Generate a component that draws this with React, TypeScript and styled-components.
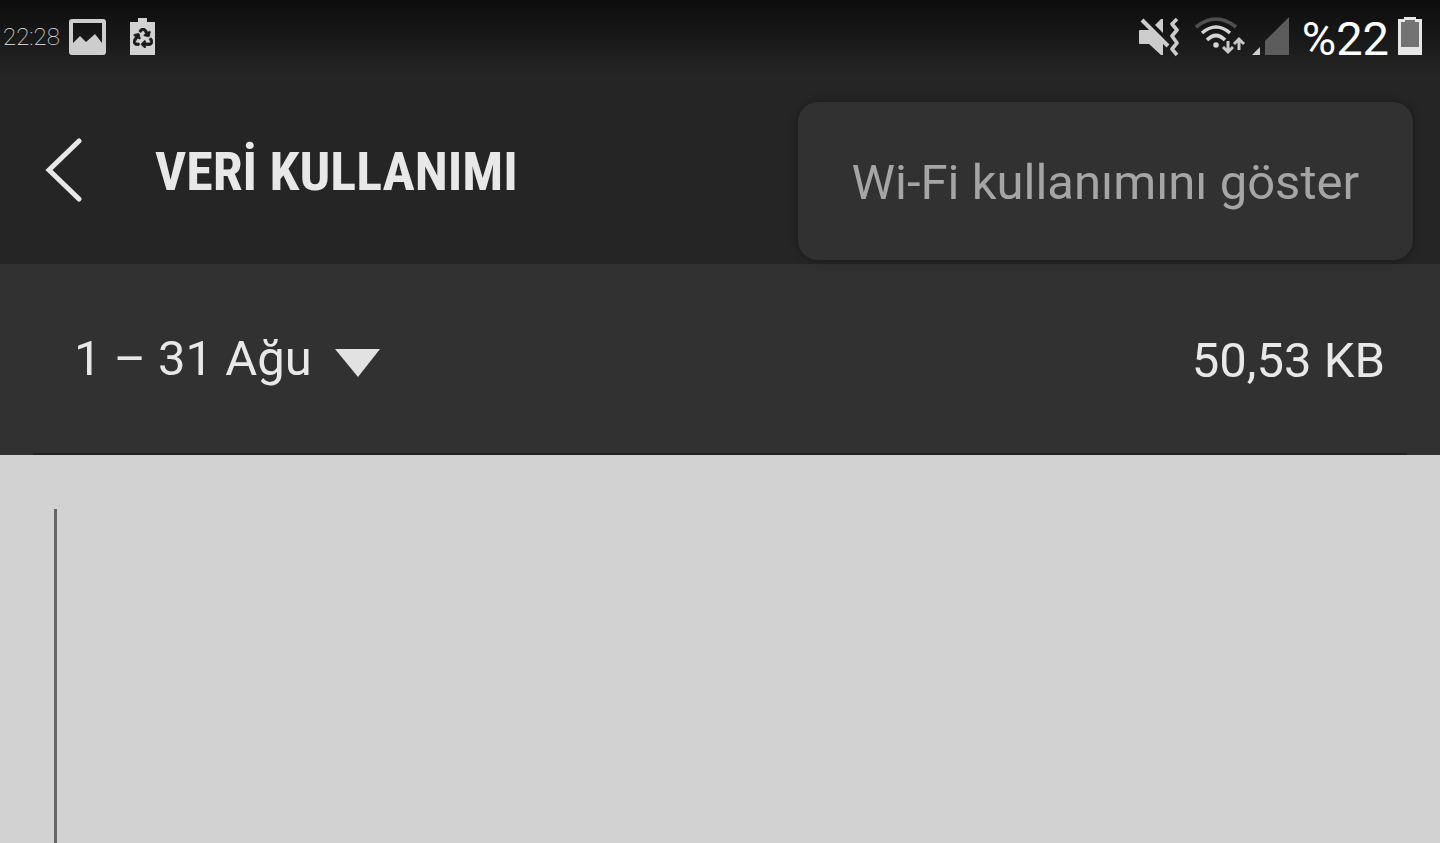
import React from "react";
import styled, { createGlobalStyle } from "styled-components";
import { FaRecycle } from "react-icons/fa";

const GlobalStyle = createGlobalStyle`
  *, *::before, *::after { box-sizing: border-box; }
  body {
    margin: 0;
    background: #d2d2d2;
    color: #e8e8e8;
    font-family: Roboto, "Noto Sans", sans-serif;
  }
`;

const Screen = styled.div`
  display: flex;
  flex-direction: column;
  min-height: 100vh;
`;

const Top = styled.div`
  display: flex;
  flex-direction: column;
  background: linear-gradient(#0c0c0c 0, #252525 76px);
`;

const StatusBar = styled.div`
  display: flex;
  align-items: center;
  justify-content: space-between;
  height: 74px;
  padding: 0 18px 0 3px;
`;

const StatusGroup = styled.div<{ $gap: number }>`
  display: flex;
  align-items: center;
  gap: ${(p) => p.$gap}px;

  svg {
    display: block;
    flex: none;
  }
`;

const Clock = styled.time`
  width: 56px;
  font-size: 24px;
  font-weight: 100;
  line-height: 32px;
`;

const NoticeIcons = styled.div`
  display: flex;
  align-items: center;
  gap: 24px;
  padding-left: 10px;
`;

const BatteryLevel = styled.span`
  font-size: 47px;
  line-height: 56px;
  color: #ffffff;
  padding-top: 4px;
`;

const Header = styled.header`
  position: relative;
  display: flex;
  align-items: center;
  gap: 71px;
  height: 190px;
  padding: 0 44px;
`;

const BackButton = styled.button`
  display: flex;
  padding: 0;
  border: 0;
  background: none;
  color: inherit;
`;

const Title = styled.h1`
  margin: 0;
  padding-top: 6px;
  font-family: "Roboto Condensed", "Liberation Sans Narrow", Roboto, sans-serif;
  font-size: 54px;
  font-weight: 700;
  line-height: 64px;
`;

const Menu = styled.div`
  position: absolute;
  top: 28px;
  right: 27px;
  border-radius: 20px;
  background: #313131;
  box-shadow: 0 0 8px rgba(0, 0, 0, 0.35);
`;

const MenuItem = styled.button`
  padding: 50px 54px 46px;
  border: 0;
  background: none;
  color: #a5a5a5;
  font: inherit;
  font-size: 49px;
  line-height: 62px;
`;

const Cycle = styled.section`
  display: flex;
  flex-direction: column;
  background: #313131;
`;

const CycleRow = styled.div`
  display: flex;
  align-items: center;
  justify-content: space-between;
  height: 189px;
  padding: 0 55px 0 74px;
`;

const Picker = styled.label`
  display: flex;
  align-items: center;
  gap: 23px;

  svg {
    padding-top: 8px;
  }
`;

const CycleSelect = styled.select`
  appearance: none;
  margin: 0;
  padding: 0;
  border: 0;
  background: none;
  color: inherit;
  font: inherit;
  font-size: 49px;
  line-height: 62px;
`;

const Usage = styled.span`
  padding-top: 4px;
  font-size: 49px;
  line-height: 62px;
`;

const Divider = styled.hr`
  align-self: stretch;
  height: 2px;
  margin: 0 33px;
  border: 0;
  background: #222222;
`;

const Chart = styled.main`
  display: flex;
  flex: 1;
  min-height: 240px;
  padding: 54px 54px 0;
`;

const Axis = styled.div`
  width: 3px;
  background: #666666;
`;

const PictureIcon = () => (
  <svg width="37" height="38" viewBox="0 0 37 38" aria-hidden="true">
    <path
      fill="#cdcdcd"
      fillRule="evenodd"
      d="M3 1H34Q37 1 37 4V34Q37 37 34 37H3Q0 37 0 34V4Q0 1 3 1ZM4 5V25L11 18L17 24L26 16L33 25V5Z"
    />
  </svg>
);

const RecycleBatteryIcon = () => (
  <svg width="25" height="38" viewBox="0 0 25 38" aria-hidden="true">
    <path fill="#d2d2d2" d="M8 0H17V4H25V37H0V4H8Z" />
    <g transform="translate(3 10)">
      <FaRecycle size={20} color="#1a1a1a" stroke="#1a1a1a" strokeWidth="20" />
    </g>
  </svg>
);

const MuteIcon = () => (
  <svg width="40" height="40" viewBox="0 0 40 40" aria-hidden="true">
    <path fill="#cccccc" d="M0 14Q0 13 1 13H13L24 24V38H22L10 27H1Q0 27 0 26Z" />
    <path fill="#cccccc" d="M24 2V16L16 8L22 2Z" />
    <path stroke="#cccccc" strokeWidth="4" d="M3 3L29 29" />
    <path
      fill="none"
      stroke="#cccccc"
      strokeWidth="3.6"
      strokeLinejoin="round"
      d="M38 2L33 7L38 13L33 19L38 26L33 32L38 38"
    />
  </svg>
);

const WifiIcon = () => (
  <svg width="50" height="40" viewBox="0 0 50 40" aria-hidden="true" fill="none">
    <g strokeWidth="3.6">
      <path stroke="#505050" d="M1 10Q21 -6 41 10" />
      <path stroke="#d4d4d4" d="M7 16Q21 4 35 16" />
      <path stroke="#d4d4d4" d="M12 23Q21 14 30 23" />
    </g>
    <circle cx="21" cy="28" r="2.8" fill="#d4d4d4" />
    <g stroke="#c8c8c8" strokeWidth="3">
      <path d="M33 24V35M28 30L33 35L38 30" />
      <path d="M44 33V22M39 27L44 22L49 27" />
    </g>
  </svg>
);

const SignalIcon = () => (
  <svg width="38" height="40" viewBox="0 0 38 40" aria-hidden="true">
    <path fill="#cfcfcf" d="M0 38L8 30V38Z" />
    <path fill="#5c5c5c" d="M13 38V24L37 0V38Z" />
  </svg>
);

const BatteryIcon = () => (
  <svg width="24" height="40" viewBox="0 0 24 40" aria-hidden="true">
    <path fill="#e6e6e6" d="M6 0H18V2H24V38H0V2H6Z" />
    <path fill="#737373" d="M7 3H17V5H21V30H3V5H7Z" />
  </svg>
);

const BackIcon = () => (
  <svg width="40" height="66" viewBox="0 0 40 66" aria-hidden="true">
    <path
      fill="none"
      stroke="#e8e8e8"
      strokeWidth="5"
      strokeLinecap="round"
      d="M35 5L5 34L35 63"
    />
  </svg>
);

const DropIcon = () => (
  <svg width="46" height="36" viewBox="0 0 46 28" aria-hidden="true">
    <path fill="#e2e2e2" d="M0 0H45L23 28Z" />
  </svg>
);

export default function App() {
  return (
    <Screen lang="tr">
      <GlobalStyle />
      <Top>
        <StatusBar>
          <StatusGroup $gap={0}>
            <Clock>22:28</Clock>
            <NoticeIcons>
              <PictureIcon />
              <RecycleBatteryIcon />
            </NoticeIcons>
          </StatusGroup>
          <StatusGroup $gap={9}>
            <StatusGroup $gap={12}>
              <StatusGroup $gap={16}>
                <MuteIcon />
                <StatusGroup $gap={7}>
                  <WifiIcon />
                  <SignalIcon />
                </StatusGroup>
              </StatusGroup>
              <BatteryLevel>%22</BatteryLevel>
            </StatusGroup>
            <BatteryIcon />
          </StatusGroup>
        </StatusBar>
        <Header>
          <BackButton type="button" aria-label="Geri">
            <BackIcon />
          </BackButton>
          <Title>VERİ KULLANIMI</Title>
          <Menu>
            <MenuItem type="button">Wi-Fi kullanımını göster</MenuItem>
          </Menu>
        </Header>
      </Top>
      <Cycle>
        <CycleRow>
          <Picker>
            <CycleSelect aria-label="Dönem" defaultValue="aug">
              <option value="aug">1 – 31 Ağu</option>
            </CycleSelect>
            <DropIcon />
          </Picker>
          <Usage>50,53 KB</Usage>
        </CycleRow>
        <Divider />
      </Cycle>
      <Chart>
        <Axis />
      </Chart>
    </Screen>
  );
}
